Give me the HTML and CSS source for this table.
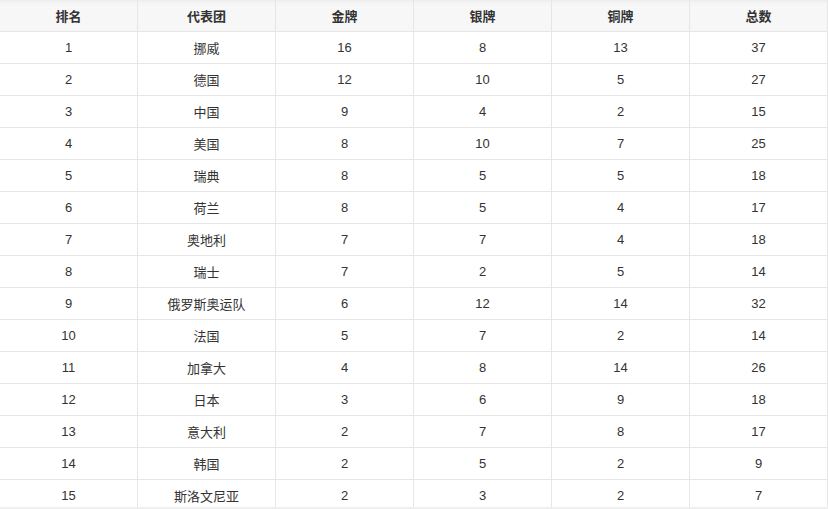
FILE: index.html
```html
<!DOCTYPE html>
<html lang="zh">
<head>
<meta charset="utf-8">
<link rel="stylesheet" href="styles.css">
</head>
<body>
<table class="medals">
<thead>
<tr><th>排名</th><th>代表团</th><th>金牌</th><th>银牌</th><th>铜牌</th><th>总数</th></tr>
</thead>
<tbody>
<tr><td>1</td><td>挪威</td><td>16</td><td>8</td><td>13</td><td>37</td></tr>
<tr><td>2</td><td>德国</td><td>12</td><td>10</td><td>5</td><td>27</td></tr>
<tr><td>3</td><td>中国</td><td>9</td><td>4</td><td>2</td><td>15</td></tr>
<tr><td>4</td><td>美国</td><td>8</td><td>10</td><td>7</td><td>25</td></tr>
<tr><td>5</td><td>瑞典</td><td>8</td><td>5</td><td>5</td><td>18</td></tr>
<tr><td>6</td><td>荷兰</td><td>8</td><td>5</td><td>4</td><td>17</td></tr>
<tr><td>7</td><td>奥地利</td><td>7</td><td>7</td><td>4</td><td>18</td></tr>
<tr><td>8</td><td>瑞士</td><td>7</td><td>2</td><td>5</td><td>14</td></tr>
<tr><td>9</td><td>俄罗斯奥运队</td><td>6</td><td>12</td><td>14</td><td>32</td></tr>
<tr><td>10</td><td>法国</td><td>5</td><td>7</td><td>2</td><td>14</td></tr>
<tr><td>11</td><td>加拿大</td><td>4</td><td>8</td><td>14</td><td>26</td></tr>
<tr><td>12</td><td>日本</td><td>3</td><td>6</td><td>9</td><td>18</td></tr>
<tr><td>13</td><td>意大利</td><td>2</td><td>7</td><td>8</td><td>17</td></tr>
<tr><td>14</td><td>韩国</td><td>2</td><td>5</td><td>2</td><td>9</td></tr>
<tr><td>15</td><td>斯洛文尼亚</td><td>2</td><td>3</td><td>2</td><td>7</td></tr>
</tbody>
</table>
<div class="bottom-edge"></div>
</body>
</html>
```
FILE: styles.css
```css
html, body {
  margin: 0;
  padding: 0;
  background: #fff;
  overflow: hidden;
}
body {
  font-family: "Liberation Sans", Arial, "Noto Sans CJK SC", sans-serif;
  font-size: 13px;
  color: #333;
}
.medals {
  width: 828px;
  border-collapse: separate;
  border-spacing: 0;
  table-layout: fixed;
}
.medals th,
.medals td {
  height: 31px;
  padding: 0;
  text-align: center;
  vertical-align: middle;
  border-right: 1px solid #e6e6e6;
  border-bottom: 1px solid #e6e6e6;
  box-sizing: content-box;
}
.medals th {
  font-weight: bold;
  background: linear-gradient(#ececec 0, #f3f3f3 2px, #f7f7f7 6px, #f7f7f7 100%);
  color: #333;
}
.bottom-edge {
  position: fixed;
  left: 0;
  right: 0;
  bottom: 0;
  height: 2px;
  background: #efefef;
}
```
